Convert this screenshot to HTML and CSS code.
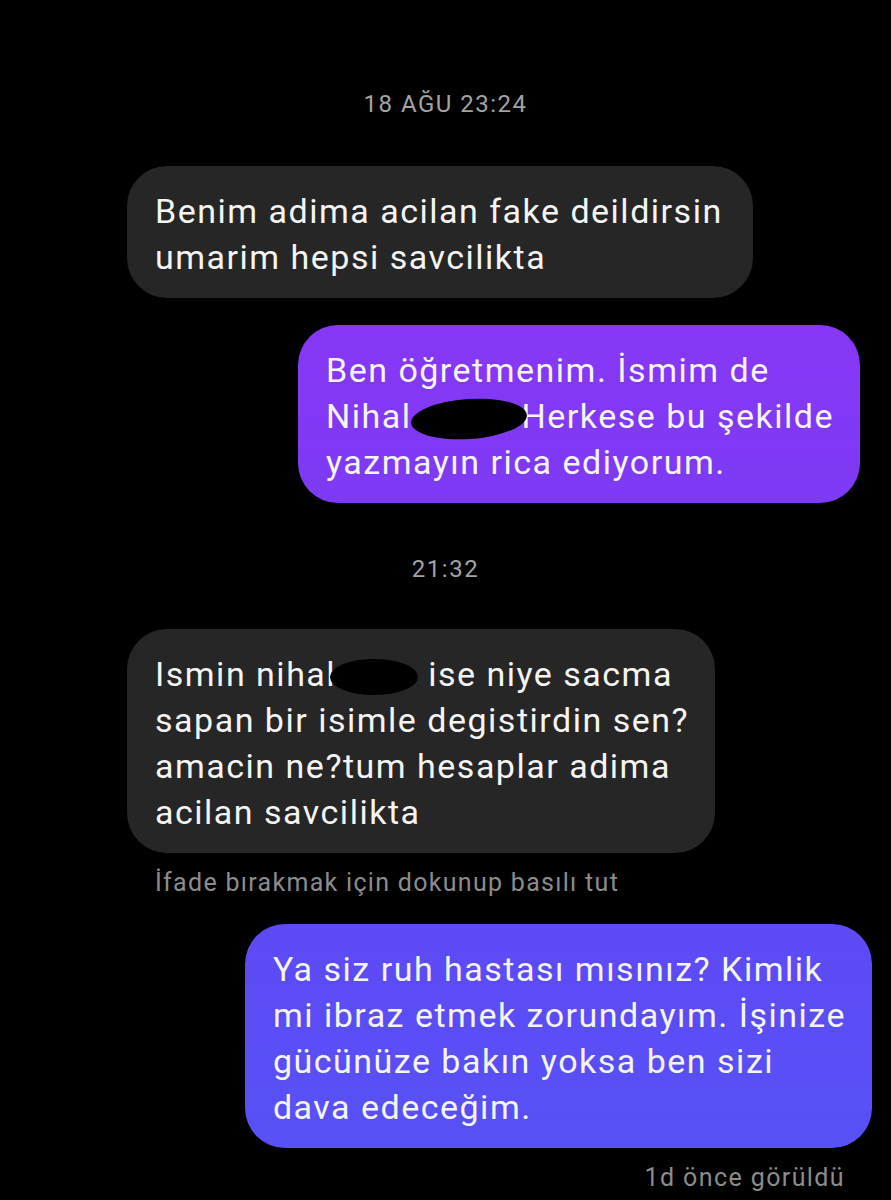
FILE: index.html
```html
<!DOCTYPE html>
<html lang="tr">
<head>
  <meta charset="UTF-8" />
  <meta name="viewport" content="width=device-width, initial-scale=1.0" />
  <title>Sohbet</title>
  <link rel="stylesheet" href="styles.css">
</head>
<body>

  <div class="chat">
    <div class="stamp">18 AĞU 23:24</div>

    <div class="row in first">
      <div class="bubble grey">Benim adima acilan fake deildirsin<br>umarim hepsi savcilikta</div>
    </div>

    <div class="row out r1">
      <div class="bubble purple">Ben öğretmenim. İsmim de<br>Nihal <span class="redact r-a"></span>Herkese bu şekilde<br>yazmayın rica ediyorum.</div>
    </div>

    <div class="stamp mid">21:32</div>

    <div class="row in">
      <div class="bubble grey">Ismin nihal<span class="redact r-b"></span>ise niye sacma<br>sapan bir isimle degistirdin sen?<br>amacin ne?tum hesaplar adima<br>acilan savcilikta</div>
    </div>
    <div class="hint">İfade bırakmak için dokunup basılı tut</div>

    <div class="row out r2">
      <div class="bubble blue">Ya siz ruh hastası mısınız? Kimlik<br>mi ibraz etmek zorundayım. İşinize<br>gücünüze bakın yoksa ben sizi<br>dava edeceğim.</div>
    </div>
    <div class="seen">1d önce görüldü</div>
  </div>

</body>
</html>
```

FILE: styles.css
```css
* { box-sizing: border-box; margin: 0; padding: 0; }

body {
  background: #000;
  font-family: Roboto, "Liberation Sans", sans-serif;
  color: #f4f4f4;
}

.chat {
  display: flex;
  flex-direction: column;
  padding-top: 88px;
}

.stamp {
  text-align: center;
  font-size: 24px;
  letter-spacing: 1.5px;
  line-height: 32px;
  color: #a3a3a3;
  margin-bottom: 46px;
}

.stamp.mid { margin-top: 50px; margin-bottom: 44px; }

.row { display: flex; }
.row.in { justify-content: flex-start; padding-left: 127px; }
.row.out { justify-content: flex-end; }
.row.r1 { padding-right: 31px; margin-top: 27px; }
.row.r2 { padding-right: 19px; margin-top: 25px; }

.bubble {
  white-space: nowrap;
  font-size: 34px;
  letter-spacing: 1.5px;
  line-height: 46px;
  padding: 22px 26px 18px 28px;
  border-radius: 40px;
}

.first .bubble { padding-right: 30px; }

.grey { background: #262626; }
.purple { background: linear-gradient(180deg, #8737f5, #7d3af4); }
.blue { background: linear-gradient(180deg, #5e4af5, #5751f6); }

.redact {
  display: inline-block;
  background: #000;
  border-radius: 50%;
  vertical-align: middle;
}

.r-a { width: 116px; height: 40px; margin-left: -10px; margin-right: -6px; transform: rotate(-4deg); }
.r-b { width: 88px; height: 36px; margin-left: -6px; margin-right: 10px; }

.hint {
  padding-left: 155px;
  font-size: 25px;
  letter-spacing: 1.3px;
  line-height: 32px;
  color: #8c8c8c;
  margin-top: 14px;
}

.seen {
  align-self: flex-end;
  margin-right: 46px;
  margin-top: 14px;
  font-size: 25px;
  letter-spacing: 1.4px;
  line-height: 32px;
  color: #8c8c8c;
}
```
